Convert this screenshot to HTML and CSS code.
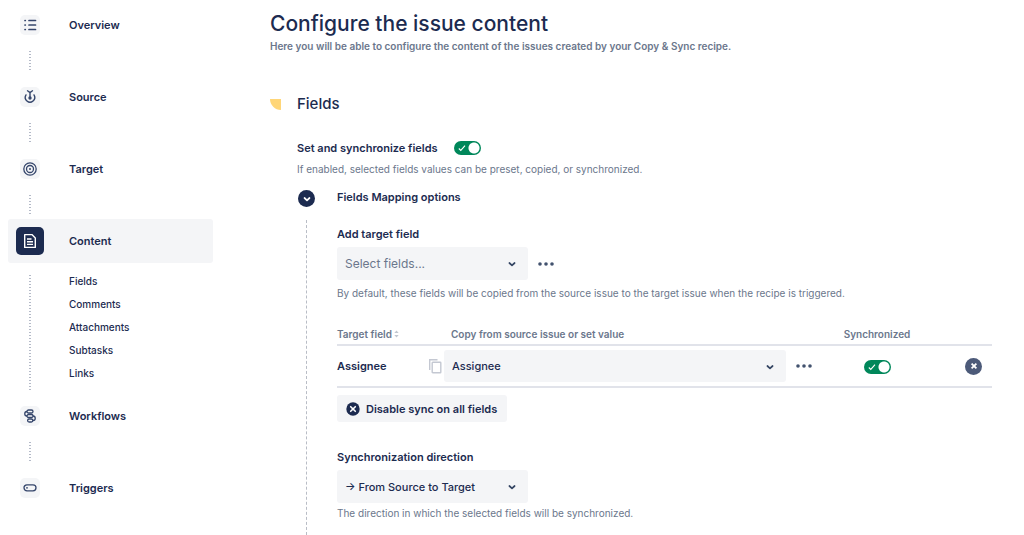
FILE: index.html
```html
<!DOCTYPE html>
<html lang="en">
  <head>
    <meta charset="UTF-8" />
    <meta name="viewport" content="width=device-width, initial-scale=1.0" />
    <title>Configure the issue content</title>
    <link rel="stylesheet" href="styles.css">
  </head>
  <body>
    <nav class="steps">
      <a class="step" href="#overview">
        <span class="step-icon">
          <svg viewBox="0 0 20 20" width="20" height="20" fill="none" stroke="currentColor" stroke-width="1.7" stroke-linecap="round">
            <path d="M9 5.5h6.5M9 10h6.5M9 14.5h6.5M5 5.5h.3M5 10h.3M5 14.5h.3" />
          </svg>
        </span>
        Overview
      </a>
      <div class="connector"></div>
      <a class="step" href="#source">
        <span class="step-icon">
          <svg viewBox="0 0 20 20" width="20" height="20" fill="none" stroke="currentColor" stroke-width="1.4" stroke-linecap="round">
            <path d="M7.5 3.8 10 5.6l2.5-1.8M10 5.6v5.4M6 7.9a4.7 4.7 0 1 0 8 0" />
            <circle cx="10" cy="11" r="1" fill="currentColor" />
          </svg>
        </span>
        Source
      </a>
      <div class="connector"></div>
      <a class="step" href="#target">
        <span class="step-icon">
          <svg viewBox="0 0 20 20" width="20" height="20" fill="none" stroke="currentColor" stroke-width="1.3">
            <circle cx="10" cy="10" r="6.2" />
            <circle cx="10" cy="10" r="3.5" />
            <circle cx="10" cy="10" r="1" fill="currentColor" stroke="none" />
          </svg>
        </span>
        Target
      </a>
      <div class="connector"></div>
      <a class="step active" href="#content">
        <span class="step-icon">
          <svg viewBox="0 0 20 20" width="20" height="20" fill="none" stroke="currentColor" stroke-width="1.4" stroke-linejoin="round">
            <path d="M4.7 3.6h7.2l3.4 3.4v9.4H4.7zM7 8h4.5M7 10.7h6M7 13.4h6" />
          </svg>
        </span>
        Content
      </a>
      <div class="substeps">
        <div class="connector"></div>
        <ul>
          <li><a href="#fields">Fields</a></li>
          <li><a href="#comments">Comments</a></li>
          <li><a href="#attachments">Attachments</a></li>
          <li><a href="#subtasks">Subtasks</a></li>
          <li><a href="#links">Links</a></li>
        </ul>
      </div>
      <a class="step" href="#workflows">
        <span class="step-icon">
          <svg viewBox="0 0 20 20" width="20" height="20" fill="none" stroke="currentColor" stroke-width="1.3">
            <rect x="7" y="4" width="6" height="3" rx="1.5" />
            <rect x="7" y="8.5" width="6" height="3" rx="1.5" />
            <rect x="7.6" y="13" width="5.2" height="3" rx="1.5" />
            <path d="M7 5.5A2.2 2.2 0 0 0 7 10M13 10a2.2 2.2 0 0 1 0 4.5" />
          </svg>
        </span>
        Workflows
      </a>
      <div class="connector"></div>
      <a class="step" href="#triggers">
        <span class="step-icon">
          <svg viewBox="0 0 20 20" width="20" height="20" fill="none" stroke="currentColor" stroke-width="1.3">
            <rect x="4" y="6.8" width="12" height="6" rx="3" />
            <circle cx="7" cy="9.8" r=".9" fill="currentColor" stroke="none" />
          </svg>
        </span>
        Triggers
      </a>
    </nav>

    <main>
      <h1>Configure the issue content</h1>
      <p class="intro">Here you will be able to configure the content of the issues created by your Copy &amp; Sync recipe.</p>

      <section id="fields">
        <h2>Fields</h2>

        <div class="sync-row">
          <label for="sync-fields">Set and synchronize fields</label>
          <span class="toggle">
            <input type="checkbox" id="sync-fields" checked />
            <svg viewBox="0 0 8 8" width="8" height="8" fill="none" stroke="#fff" stroke-width="1.1"><path d="M.8 4.5l2 1.9L7 1.7" /></svg>
          </span>
        </div>
        <p class="hint">If enabled, selected fields values can be preset, copied, or synchronized.</p>

        <div class="mapping">
          <div class="rail">
            <button class="round collapse" type="button" aria-label="Collapse">
              <svg viewBox="0 0 10 10" width="10" height="10" fill="none" stroke="currentColor" stroke-width="1.7" stroke-linecap="round" stroke-linejoin="round"><path d="M2.5 4 5 6.3 7.5 4" /></svg>
            </button>
          </div>
          <div class="options">
            <h3>Fields Mapping options</h3>

            <label class="field-label" for="add-field">Add target field</label>
            <div class="field-row">
              <span class="select placeholder">
                <select id="add-field"><option>Select fields...</option></select>
                <svg viewBox="0 0 10 10" width="10" height="10" fill="none" stroke="currentColor" stroke-width="1.7" stroke-linecap="round" stroke-linejoin="round"><path d="M2.4 4 5 6.3 7.6 4" /></svg>
              </span>
              <button class="more" type="button" aria-label="More">
                <svg viewBox="0 0 16 4" width="16" height="4" fill="currentColor"><circle cx="2" cy="2" r="1.8" /><circle cx="8" cy="2" r="1.8" /><circle cx="14" cy="2" r="1.8" /></svg>
              </button>
            </div>
            <p class="hint">By default, these fields will be copied from the source issue to the target issue when the recipe is triggered.</p>

            <table>
              <thead>
                <tr>
                  <th class="col-target">Target field
                    <svg viewBox="0 0 5 8" width="5" height="8" fill="#c1c7d0"><path d="M.3 3 2.5.6 4.7 3zM.3 5l2.2 2.4L4.7 5z" /></svg>
                  </th>
                  <th class="col-value">Copy from source issue or set value</th>
                  <th class="col-sync">Synchronized</th>
                  <th class="col-remove"></th>
                </tr>
              </thead>
              <tbody>
                <tr>
                  <td>
                    <div class="target-cell">
                      Assignee
                      <svg viewBox="0 0 14 16" width="14" height="16" fill="none" stroke="#c4c8d2" stroke-width="1.4"><path d="M1.7 12V1.7H9.5" /><rect x="4.2" y="4.2" width="8.6" height="10.6" rx=".6" /></svg>
                    </div>
                  </td>
                  <td>
                    <div class="field-row">
                      <span class="select wide">
                        <select aria-label="Value for Assignee"><option>Assignee</option></select>
                        <svg viewBox="0 0 10 10" width="10" height="10" fill="none" stroke="currentColor" stroke-width="1.7" stroke-linecap="round" stroke-linejoin="round"><path d="M2.4 4 5 6.3 7.6 4" /></svg>
                      </span>
                      <button class="more" type="button" aria-label="More">
                        <svg viewBox="0 0 16 4" width="16" height="4" fill="currentColor"><circle cx="2" cy="2" r="1.8" /><circle cx="8" cy="2" r="1.8" /><circle cx="14" cy="2" r="1.8" /></svg>
                      </button>
                    </div>
                  </td>
                  <td class="col-sync">
                    <span class="toggle">
                      <input type="checkbox" aria-label="Synchronize Assignee" checked />
                      <svg viewBox="0 0 8 8" width="8" height="8" fill="none" stroke="#fff" stroke-width="1.1"><path d="M.8 4.5l2 1.9L7 1.7" /></svg>
                    </span>
                  </td>
                  <td class="col-remove">
                    <button class="round remove" type="button" aria-label="Remove">
                      <svg viewBox="0 0 8 8" width="8" height="8" stroke="currentColor" stroke-width="1.8"><path d="M1.6 1.6l4.8 4.8M6.4 1.6 1.6 6.4" /></svg>
                    </button>
                  </td>
                </tr>
              </tbody>
            </table>

            <button class="disable" type="button">
              <svg viewBox="0 0 14 14" width="14" height="14"><circle cx="7" cy="7" r="6.7" fill="#1c2b50" /><path d="M4.7 4.7l4.6 4.6M9.3 4.7 4.7 9.3" stroke="#fff" stroke-width="1.6" stroke-linecap="round" /></svg>
              Disable sync on all fields
            </button>

            <label class="field-label" for="direction">Synchronization direction</label>
            <div class="field-row">
              <span class="select">
                <select id="direction"><option>→ From Source to Target</option></select>
                <svg viewBox="0 0 10 10" width="10" height="10" fill="none" stroke="currentColor" stroke-width="1.7" stroke-linecap="round" stroke-linejoin="round"><path d="M2.4 4 5 6.3 7.6 4" /></svg>
              </span>
            </div>
            <p class="hint direction-hint">The direction in which the selected fields will be synchronized.</p>
          </div>
        </div>
      </section>
    </main>
  </body>
</html>
```
FILE: styles.css
```css
* {
  box-sizing: border-box;
}
body {
  display: flex;
  gap: 57px;
  min-height: 100vh;
  margin: 0;
  padding: 0 32px 0 8px;
  background-color: #fff;
  color: #1c2b50;
  font-family: Inter, sans-serif;
  font-size: 11px;
  line-height: 16px;
}
h1,
h2,
h3,
p,
ul {
  margin: 0;
  padding: 0;
}
svg {
  display: block;
  flex: none;
}
a {
  color: inherit;
  text-decoration: none;
}
button,
select {
  border: none;
  color: inherit;
  font: inherit;
}

/* sidebar */
.steps {
  flex: none;
  width: 205px;
  padding-top: 3px;
}
.step {
  display: grid;
  grid-template-columns: 44px 1fr;
  column-gap: 17px;
  align-items: center;
  height: 44px;
  border-radius: 3px;
  font-weight: 600;
}
.step-icon {
  display: grid;
  place-items: center;
  justify-self: center;
  width: 20px;
  height: 20px;
  border-radius: 5px;
  background-color: #f4f5f7;
  color: #34456b;
}
.step.active {
  background-color: #f4f5f7;
}
.active .step-icon {
  width: 28px;
  height: 28px;
  background-color: #1c2b50;
  color: #fff;
}
.connector {
  width: 2px;
  height: 20px;
  margin: 4px 21px;
  background: repeating-linear-gradient(#b4bac8 0 1px, transparent 1px 3px);
}
.substeps {
  display: flex;
  padding: 7px 0 9px;
}
.substeps .connector {
  height: auto;
  margin: 5px 38px -5px 21px;
}
.substeps ul {
  list-style: none;
  font-size: 10px;
  font-weight: 500;
  line-height: 23px;
}

/* content */
main {
  display: flex;
  flex: 1;
  flex-direction: column;
  padding-top: 8px;
}
h1 {
  font-size: 21px;
  font-weight: 500;
  line-height: 32px;
}
.intro {
  color: #6b778c;
  font-size: 10px;
  font-weight: 600;
  line-height: 12px;
}
section {
  display: flex;
  flex: 1;
  flex-direction: column;
  padding: 42px 0 0 27px;
}
h2 {
  display: flex;
  align-items: center;
  gap: 16px;
  margin-left: -27px;
  font-size: 15px;
  font-weight: 500;
  line-height: 20px;
}
h2::before {
  content: "";
  width: 11px;
  height: 11px;
  border-radius: 0 0 0 11px;
  background-color: #ffd678;
}
h3 {
  font-size: 11px;
  font-weight: 600;
}
.sync-row {
  display: flex;
  align-items: center;
  gap: 16px;
  margin-top: 26px;
  font-weight: 600;
}
.hint {
  color: #6b778c;
  font-size: 10px;
}
.sync-row + .hint {
  margin-top: 5px;
}
.toggle {
  display: inline-block;
  position: relative;
  width: 27px;
  height: 14px;
  vertical-align: middle;
}
.toggle input {
  display: block;
  width: 100%;
  height: 100%;
  margin: 0;
  border-radius: 7px;
  background: radial-gradient(circle at 20px 7px, #fff 5px, #00875a 6px);
  appearance: none;
}
.toggle svg {
  position: absolute;
  top: 3px;
  left: 4px;
  pointer-events: none;
}
.mapping {
  display: flex;
  flex: 1;
  gap: 21px;
  margin-top: 12px;
}
.rail {
  display: flex;
  flex-direction: column;
  align-items: center;
  gap: 13px;
  width: 19px;
}
.rail::after {
  content: "";
  flex: 1;
  border-left: 1px dashed #b9bdc6;
}
.round {
  display: inline-grid;
  place-items: center;
  width: 17px;
  height: 17px;
  padding: 0;
  border-radius: 50%;
  color: #fff;
}
.collapse {
  margin-top: 1px;
  background-color: #1c2b50;
}
.remove {
  background-color: #4c5a79;
}
.options {
  flex: 1;
}
.field-label {
  display: block;
  margin: 21px 0 5px;
  font-weight: 600;
}
.field-row {
  display: flex;
  align-items: center;
  gap: 10px;
}
.select {
  position: relative;
  width: 191px;
  font-size: 12px;
}
.select.wide {
  flex: 1;
  font-size: 11px;
}
.select select {
  display: block;
  width: 100%;
  height: 33px;
  padding: 0 24px 0 8px;
  border-radius: 3px;
  background-color: #f4f5f7;
  font-size: 11px;
  font-weight: 500;
  appearance: none;
}
.select.wide select {
  height: 32px;
}
.select.placeholder select {
  color: #6b778c;
  font-size: 12px;
  font-weight: 400;
}
.select svg {
  position: absolute;
  top: 12px;
  right: 11px;
  color: #344563;
  pointer-events: none;
}
.more {
  padding: 6px 0;
  background: none;
  color: #42526e;
}
.field-row + .hint {
  margin-top: 5px;
}
.field-row + .direction-hint {
  margin-top: 2px;
}

table {
  width: 100%;
  margin-top: 23px;
  border-collapse: collapse;
  table-layout: fixed;
}
th {
  padding: 2px 0;
  border-bottom: 2px solid #e1e3ea;
  color: #6b778c;
  font-size: 10px;
  font-weight: 600;
  text-align: left;
}
th svg {
  display: inline-block;
}
td {
  padding: 4px 0;
  border-bottom: 2px solid #e1e3ea;
}
.col-target {
  width: 107px;
}
th.col-value {
  padding-left: 7px;
}
.col-sync {
  width: 130px;
  text-align: center;
}
.col-remove {
  width: 50px;
  padding-right: 10px;
  text-align: right;
}
.target-cell {
  display: flex;
  align-items: center;
  justify-content: space-between;
  padding-right: 2px;
  font-weight: 600;
}
td.col-remove .round {
  vertical-align: middle;
}
.disable {
  display: flex;
  align-items: center;
  gap: 6px;
  height: 27px;
  margin-top: 7px;
  padding: 0 10px 0 9px;
  border-radius: 3px;
  background-color: #f4f5f7;
  font-weight: 600;
}
.disable + .field-label {
  margin-top: 27px;
}
```
